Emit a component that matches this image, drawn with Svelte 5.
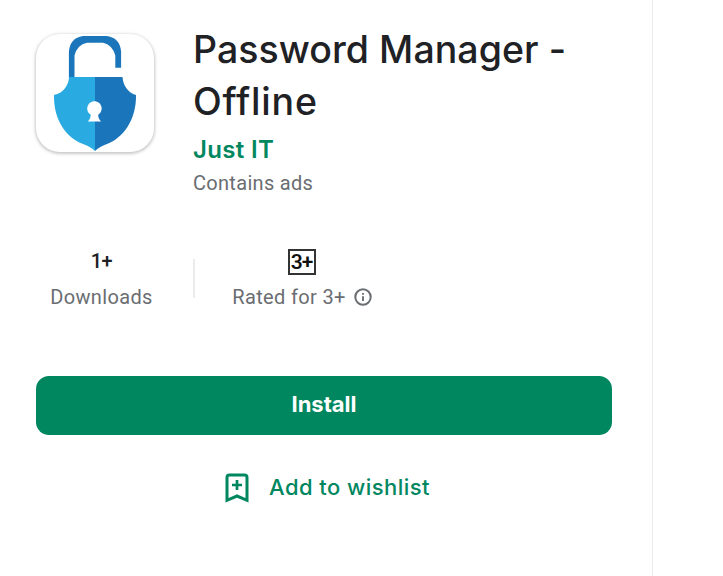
<script>
  const titleLines = ['Password Manager -', 'Offline'];
</script>

<main>
  <section class="details">
    <header>
      <div class="app-icon">
        <svg width="118" height="118" viewBox="0 0 118 118" aria-hidden="true">
          <path d="M32.900 43.500V17.500Q34 4 47 2H71Q84 4 85.100 17.500V33.700H79.300V21.500Q76.500 11 67 8.800H51Q41 11 38.500 21.500V43.500Z" fill="#1b75bb" />
          <path d="M59 43H33C33 51 27 59.5 18 61C17.5 87 31 104 47 110Q55 113 59 117Z" fill="#29abe2" />
          <path d="M59 43H86.5C87 51 92 59 100 61C100.500 86 87 104 71 110Q63 113 59 117Z" fill="#1b75bb" />
          <path d="M54.7 80.600C48.500 76.500 51.400 67.200 58.500 67.200S68.500 76.500 62.300 80.600Q61.800 84 65 87.500H52Q55.200 84 54.700 80.600Z" fill="#fff" />
        </svg>
      </div>
      <div class="heading">
        <h1>{#each titleLines as line}<span>{line}</span>{/each}</h1>
        <div class="developer">Just IT</div>
        <div class="ads">Contains ads</div>
      </div>
    </header>

    <div class="stats">
      <div class="stat downloads">
        <div class="value">1+</div>
        <div class="label">Downloads</div>
      </div>
      <div class="stat rating">
        <div class="value"><span class="badge">3+</span></div>
        <div class="label">
          <span>Rated for 3+</span>
          <svg width="18" height="18" viewBox="0 0 18 18" fill="none" stroke="#6a6d71" aria-hidden="true">
            <circle cx="9" cy="9" r="7.700" stroke-width="2" />
            <path d="M9 8.200V13M9 5V6.800" stroke-width="1.900" />
          </svg>
        </div>
      </div>
    </div>

    <button class="install"><span>Install</span></button>
    <button class="wishlist">
      <svg width="24" height="31" viewBox="0 0 24 31" fill="none" stroke="#01875f" aria-hidden="true">
        <path d="M2 27.300V4.500Q2 2 4.500 2H19.500Q22 2 22 4.500V27.300L12 23Z" stroke-width="3" />
        <path d="M12 7V17M7 12H17" stroke-width="2.700" />
      </svg>
      <span>Add to wishlist</span>
    </button>
  </section>
</main>

<style>
  :global(body) { background: #fff; }
  main { height: 576px; overflow: hidden; }
  .details {
    box-sizing: border-box;
    width: 653px;
    height: 576px;
    padding: 23px 40px 0 36px;
    border-right: 1px solid #ebebeb;
    font-family: Roboto, "Liberation Sans", sans-serif;
  }
  header { display: flex; height: 210px; }
  .app-icon {
    width: 118px;
    height: 118px;
    margin-top: 11px;
    flex: none;
    border-radius: 24px;
    box-shadow: 0 1px 3px 1px rgba(60, 64, 67, 0.28);
  }
  .app-icon svg { display: block; }
  .heading { margin-left: 39px; white-space: nowrap; }
  h1 {
    margin: 0;
    padding-top: 1px;
    color: #202124;
    font: 450 37.500px/52px Inter, sans-serif;
    letter-spacing: 0.050px;
  }
  h1 span { display: block; }
  h1 span + span { letter-spacing: 0.800px; }
  .developer {
    height: 32px;
    margin-top: 6px;
    color: #01875f;
    font: 600 24px/32px Inter, sans-serif;
    letter-spacing: 0.350px;
  }
  .ads {
    margin-top: 4px;
    color: #6a6d71;
    font-size: 20px;
    line-height: 26px;
    letter-spacing: 0.300px;
  }
  .stats { display: flex; height: 143px; }
  .stat { text-align: center; white-space: nowrap; }
  .downloads { width: 131px; }
  .rating { width: 218px; position: relative; margin-left: 26px; }
  .rating::before {
    content: "";
    position: absolute;
    left: 0;
    top: 26px;
    width: 2px;
    height: 39px;
    background: #ebebeb;
  }
  .value {
    height: 30px;
    margin-top: 13px;
    color: #202124;
    font: 500 20px/30px Roboto, sans-serif;
    display: flex;
    justify-content: center;
    align-items: center;
  }
  .downloads .value { letter-spacing: -0.500px; }
  .badge {
    box-sizing: border-box;
    width: 28px;
    height: 26px;
    margin-top: 2px;
    border: 2px solid #333;
    color: #111;
    font: 600 21px/23px Roboto, sans-serif;
    letter-spacing: -1px;
    text-indent: -1px;
  }
  .label {
    display: flex;
    align-items: center;
    justify-content: center;
    gap: 8px;
    margin-top: 8px;
    color: #6a6d71;
    font-size: 20px;
    line-height: 26px;
    letter-spacing: 0.350px;
  }
  button { display: flex; align-items: center; justify-content: center; border: 0; padding: 0; width: 576px; }
  .install {
    height: 59px;
    padding-bottom: 3px;
    border-radius: 13px;
    background: #01875f;
    color: #fff;
    font: 650 22px/30px Inter, sans-serif;
  }
  .wishlist {
    height: 58px;
    margin-top: 24px;
    padding-left: 7px;
    gap: 20px;
    background: none;
    color: #01875f;
    font: 500 22px/30px Inter, sans-serif;
    letter-spacing: 0.450px;
  }
  .wishlist span { padding-bottom: 3px; }
</style>
